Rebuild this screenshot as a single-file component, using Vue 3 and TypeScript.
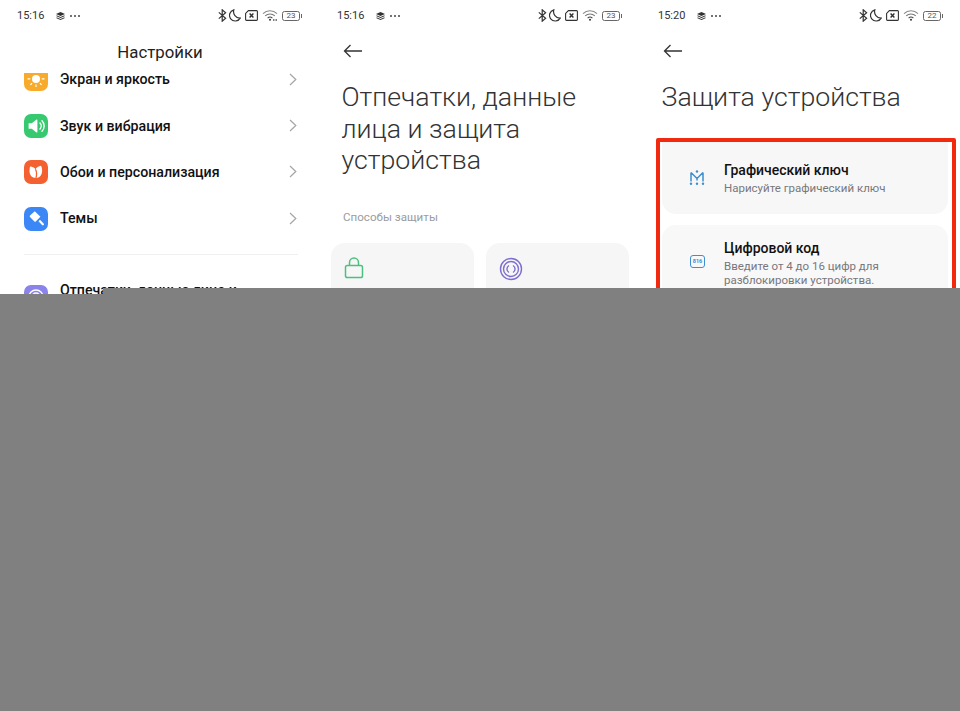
<template>
  <div class="page">
    <div class="shots">
      <section v-for="(s, i) in screens" :key="i" class="shot" :class="'shot-' + i">
        <div class="status">
          <span class="time">{{ s.time }}</span>
          <svg class="layers" width="9" height="8" viewBox="0 0 9 8">
            <path d="M4.5 0 9 2 4.500 4 0 2z" fill="#333" />
            <path d="M0.5 3.200 4.500 5 8.500 3.200v1L4.500 6 .5 4.200zM.5 5.200 4.500 7 8.500 5.200v1L4.500 8 .5 6.200z" fill="#333" />
          </svg>
          <span class="dots"><i></i><i></i><i></i></span>
          <span class="spacer"></span>
          <svg width="9" height="13" viewBox="0 0 9 13" fill="none" stroke="#333" stroke-width="1.2">
            <path d="M.8 3.400 7.600 9.300 4.200 12.200V.8L7.600 3.700.8 9.600" />
          </svg>
          <svg class="moon" width="12" height="13" viewBox="0 0 12 13" fill="none" stroke="#333" stroke-width="1.2">
            <path d="M4.800.8a5.700 5.700 0 1 0 6.400 8.300A6.500 6.500 0 0 1 4.800.8z" />
          </svg>
          <svg class="sim" width="13" height="11" viewBox="0 0 13 11" fill="none" stroke="#333" stroke-width="1.1">
            <path d="M3.400.6h8.200a.8.8 0 0 1 .8.8v8.200a.8.8 0 0 1-.8.8H1.400a.8.8 0 0 1-.8-.8V3.400z" />
            <path d="M4.600 3.500 8.400 7.500M8.400 3.500 4.600 7.500" stroke-width="1.400" />
          </svg>
          <svg class="wifi" width="16" height="11" viewBox="0 0 16 11" fill="none" stroke-width="1.100">
            <path d="M1 3.600a10 10 0 0 1 14 0" stroke="#8a8a8a" />
            <path d="M3.200 5.900a7 7 0 0 1 9.600 0" stroke="#777" />
            <path d="M5.600 8.100a3.500 3.500 0 0 1 4.800 0" stroke="#444" />
            <circle cx="8" cy="9.800" r="1" fill="#333" />
            <path v-if="i === 0" d="M11 10h1.500M13.500 10H15" stroke="#555" stroke-width="1.300" />
          </svg>
          <span class="battery"><span>{{ s.battery }}</span></span>
        </div>

        <template v-if="i === 0">
          <h2 class="nav-title">Настройки</h2>
          <div class="list">
            <div v-for="row in rows" :key="row.label" class="row">
              <span class="app-icon" :class="row.kind">
                <svg v-if="row.kind === 'sun'" width="24" height="24" viewBox="0 0 24 24" fill="#fff">
                  <circle cx="12" cy="12" r="4" />
                  <path d="M3.500 11.300h2.800v1.300H3.500zM17.700 11.300h2.800v1.300h-2.800zM11.400 17.400h1.200v2.600h-1.200zM6 17.200l1.700-1.400.8.900-1.700 1.500zM18 17.200l-1.700-1.400-.8.900 1.700 1.500z" />
                </svg>
                <svg v-else-if="row.kind === 'sound'" width="24" height="24" viewBox="0 0 24 24">
                  <path d="M4.600 9.200h3.200l4.700-3.600c.4-.3.900 0 .9.500v11.800c0 .5-.5.8-.9.500l-4.700-3.600H4.600z" fill="#fff" />
                  <path d="M16 9a4.400 4.400 0 0 1 0 6M18 6.800a7.400 7.400 0 0 1 0 10.400" fill="none" stroke="#fff" stroke-width="1.400" stroke-linecap="round" />
                </svg>
                <svg v-else-if="row.kind === 'wall'" width="24" height="24" viewBox="0 0 24 24">
                  <path d="M6 6.600c2.300.1 4.200 1 5.500 2.600 1-1.700 2.900-3 5.600-3.500.8 1.800 1.100 3.800 1 5.800-.2 3.700-2.800 6.600-6.300 6.600s-6.200-2.800-6.300-6.500c0-1.800.1-3.400.5-5z" fill="#fff" />
                  <path d="M11.500 9.200c1.200 2.400 1.500 5.600.4 8.800" fill="none" stroke="#f4602f" stroke-width="1.300" />
                </svg>
                <svg v-else width="24" height="24" viewBox="0 0 24 24" fill="#fff">
                  <path d="M10.800 4.200 16.400 9.800l-4.600 4.600a1 1 0 0 1-1.400 0L6 10a1 1 0 0 1 0-1.400z" />
                  <path d="M14.500 14.200l1.500-1.500 3.600 3.800c.5.500.5 1.200 0 1.600-.4.400-1.100.4-1.600 0z" />
                </svg>
              </span>
              <span class="row-label">{{ row.label }}</span>
              <svg class="chevron" width="8" height="13" viewBox="0 0 8 13" fill="none" stroke="#a5a5a5" stroke-width="1.200">
                <path d="M1 1l5.800 5.500L1 12" />
              </svg>
            </div>
            <div class="divider"></div>
            <div class="row partial">
              <span class="app-icon finger">
                <svg width="24" height="24" viewBox="0 0 24 24" fill="none" stroke="#fff" stroke-width="1.400">
                  <circle cx="12" cy="12" r="7" />
                  <circle cx="12" cy="12" r="4" />
                </svg>
              </span>
              <span class="row-label">Отпечатки, данные лица и</span>
            </div>
          </div>
          <div class="mask"></div>
        </template>

        <template v-else-if="i === 1">
          <svg class="back" width="20" height="14" viewBox="0 0 20 14" fill="none" stroke="#333" stroke-width="1.300">
            <path d="M19 7H1.500M7.500 1 1.500 7l6 6" />
          </svg>
          <h1 class="big-title">Отпечатки, данные лица и защита устройства</h1>
          <p class="section-label">Способы защиты</p>
          <div class="tiles">
            <div class="tile">
              <svg width="20" height="22" viewBox="0 0 20 22" fill="none" stroke="#4cc17f" stroke-width="1.500">
                <rect x="1.500" y="8.500" width="17" height="12" rx="1.800" />
                <path d="M5.500 8.500V5.500a4.500 4.500 0 0 1 9 0v3" />
              </svg>
            </div>
            <div class="tile">
              <svg width="24" height="24" viewBox="0 0 24 24" fill="none" stroke="#7d6fd0" stroke-width="1.400">
                <circle cx="12" cy="12" r="10.500" />
                <circle cx="12" cy="12" r="7.500" />
                <path d="M10 8.500a4 4 0 0 0 0 7M14 8.500a4 4 0 0 1 0 7" />
              </svg>
            </div>
          </div>
        </template>

        <template v-else>
          <svg class="back" width="20" height="14" viewBox="0 0 20 14" fill="none" stroke="#333" stroke-width="1.300">
            <path d="M19 7H1.500M7.500 1 1.500 7l6 6" />
          </svg>
          <h1 class="big-title">Защита устройства</h1>
          <div class="frame">
            <div class="option first">
              <svg class="opt-icon" width="16" height="16" viewBox="0 0 16 16" fill="none" stroke="#3d8fd1" stroke-width="1.500">
                <path d="M2 2.500v9M14 2.500v9M2 2.500l6 6 6-6M8 8.500v2" />
                <g fill="#3d8fd1" stroke="none">
                  <circle cx="8" cy="1.500" r="1.200" />
                  <circle cx="8" cy="13.800" r="1.200" />
                  <circle cx="2" cy="13.800" r="1.200" />
                  <circle cx="14" cy="13.800" r="1.200" />
                </g>
              </svg>
              <div class="opt-text">
                <div class="opt-title">Графический ключ</div>
                <div class="opt-sub">Нарисуйте графический ключ</div>
              </div>
            </div>
            <div class="option second">
              <span class="pin-icon">816</span>
              <div class="opt-text">
                <div class="opt-title">Цифровой код</div>
                <div class="opt-sub">Введите от 4 до 16 цифр для<br />разблокировки устройства.</div>
              </div>
            </div>
          </div>
        </template>
      </section>
    </div>
    <div class="blank"></div>
  </div>
</template>

<script setup lang="ts">
const screens = [
  { time: '15:16', battery: 23 },
  { time: '15:16', battery: 23 },
  { time: '15:20', battery: 22 },
];

const rows = [
  { label: 'Экран и яркость', kind: 'sun' },
  { label: 'Звук и вибрация', kind: 'sound' },
  { label: 'Обои и персонализация', kind: 'wall' },
  { label: 'Темы', kind: 'theme' },
];
</script>

<style scoped>
.page {
  width: 960px;
  height: 711px;
  display: flex;
  flex-direction: column;
  overflow: hidden;
  background: #808080;
  font-family: Roboto, "Liberation Sans", sans-serif;
  color: #111;
}

.shots {
  display: flex;
  height: 294px;
  flex: none;
}

.blank {
  flex: 1;
  background: #808080;
}

.shot {
  position: relative;
  width: 320px;
  height: 288px;
  overflow: hidden;
  display: flex;
  flex-direction: column;
  background: #fff;
}

.shot-0 {
  height: 294px;
}

/* the grey cover starts lower under the left part of the first screen */
.mask {
  position: absolute;
  left: 103px;
  right: 0;
  top: 288px;
  height: 6px;
  background: #808080;
}

.status {
  flex: none;
  height: 31px;
  display: flex;
  align-items: center;
  padding: 0 19px 0 17px;
  font-size: 11px;
  color: #333;
}

.shot-2 .status {
  padding-left: 18px;
  padding-right: 18px;
}

.time {
  width: 39px;
}

.layers {
  margin-right: 5px;
}

.dots {
  display: flex;
  gap: 2px;
}

.dots i {
  width: 2px;
  height: 2px;
  border-radius: 50%;
  background: #444;
}

.spacer {
  flex: 1;
}

.moon {
  margin-left: 2px;
}

.sim {
  margin-left: 4px;
}

.wifi {
  margin-left: 4px;
}

.battery {
  position: relative;
  margin-left: 4px;
  width: 18px;
  height: 10px;
  border: 1px solid #666;
  border-radius: 2.500px;
  box-sizing: border-box;
  display: flex;
  align-items: center;
  justify-content: center;
  font-size: 8px;
  color: #555;
  margin-right: 1px;
}

.battery::after {
  content: "";
  position: absolute;
  right: -3px;
  top: 2px;
  width: 1.500px;
  height: 4px;
  background: #666;
}

.nav-title {
  flex: none;
  height: 35px;
  margin: 0;
  text-align: center;
  font-size: 16.800px;
  font-weight: 400;
  line-height: 42px;
  color: #222;
}

.list {
  flex: 1;
  overflow: hidden;
  padding: 0 22px 0 24px;
}

.row {
  height: 46.400px;
  display: flex;
  align-items: center;
}

.row:first-child {
  margin-top: -10px;
}

.row-label {
  flex: 1;
  margin-left: 12px;
  font-size: 14.200px;
  font-weight: 500;
  color: #111;
}

.app-icon {
  flex: none;
  width: 24px;
  height: 24px;
  border-radius: 7px;
  display: block;
  margin-top: 1px;
}

.app-icon svg {
  display: block;
}

.sun {
  height: 18px;
  margin-top: 6px;
  border-radius: 0 0 7px 7px;
  overflow: hidden;
  background: #f8ab2a;
}

.sun svg {
  margin-top: -6px;
}

.sound {
  background: #37c96f;
}

.wall {
  background: #f4602f;
}

.theme {
  background: #3b87f5;
}

.finger {
  background: #8b82ec;
}

.chevron {
  margin-right: 1px;
}

.divider {
  height: 1px;
  background: #efefef;
  margin: 12px 0 24px;
}

.partial {
  align-items: flex-start;
  height: 40px;
}

.partial .row-label {
  margin-top: 3px;
}

.partial .app-icon {
  margin-top: 6px;
}

.back {
  flex: none;
  margin: 13px 0 0 23px;
}

.big-title {
  margin: 24px 20px 0 21.500px;
  font-size: 26.700px;
  font-weight: 300;
  line-height: 31.500px;
  color: #333;
}

.section-label {
  margin: 32px 0 0 23px;
  font-size: 11.600px;
  line-height: 16px;
  color: #9b9ba0;
}

.tiles {
  margin: 18px 11px 0;
  display: grid;
  grid-template-columns: 143px 143px;
  column-gap: 12px;
}

.tile {
  height: 80px;
  border-radius: 14px;
  background: #f6f6f6;
  padding: 14px 0 0 13px;
}

.frame {
  margin: 24px 4px 0 16px;
  border: 4px solid #f0290f;
  border-radius: 2px;
  flex: 1;
  min-height: 200px;
  padding: 0 4px 0 2px;
}

.option {
  background: #f7f7f7;
  border-radius: 14px;
  display: flex;
  align-items: center;
}

.option.first {
  height: 72px;
  border-top-left-radius: 0;
  border-top-right-radius: 0;
}

.option.second {
  margin-top: 11px;
  height: 76px;
  background: #f8f8f8;
}

.opt-icon {
  flex: none;
  margin-left: 27px;
}

.pin-icon {
  flex: none;
  box-sizing: border-box;
  width: 15px;
  height: 13px;
  margin: -3px 1px 0 28px;
  border: 1.200px solid #3d8fd1;
  border-radius: 3px;
  font-size: 5.500px;
  font-weight: 700;
  line-height: 10.500px;
  text-align: center;
  color: #3d8fd1;
}

.opt-text {
  margin-left: 19px;
}

.pin-icon + .opt-text {
  margin-left: 18px;
}

.opt-title {
  font-size: 14px;
  font-weight: 500;
  line-height: 18px;
  color: #111;
}

.opt-sub {
  margin-top: 2px;
  font-size: 11.500px;
  line-height: 14px;
  color: #77777c;
}
</style>
